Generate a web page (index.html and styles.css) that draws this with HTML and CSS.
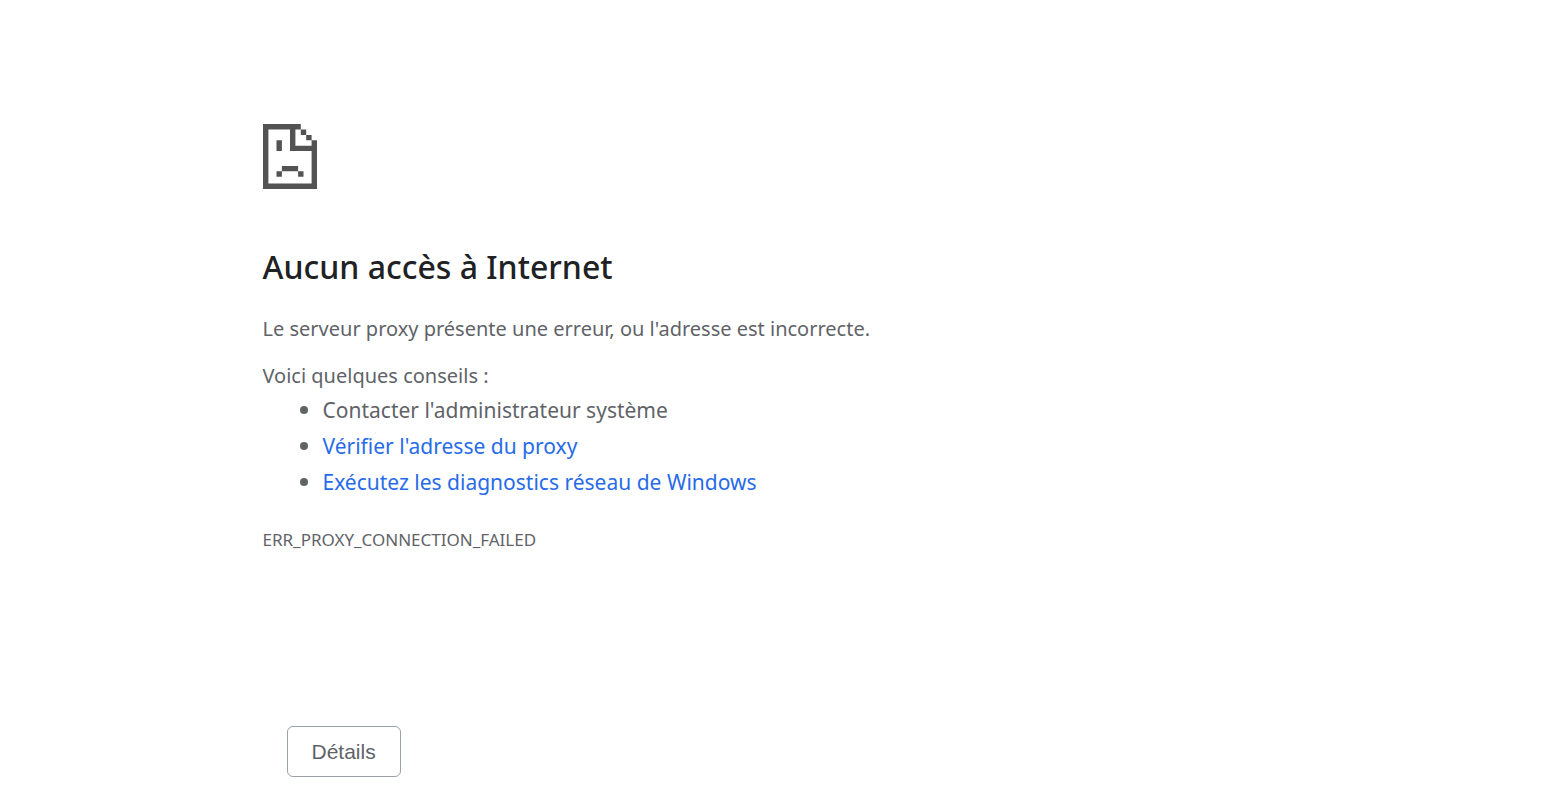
FILE: index.html
```
<!DOCTYPE html>
<html lang="fr">
<head>
<meta charset="utf-8">
<meta name="viewport" content="width=device-width, initial-scale=1">
<title>Aucun accès à Internet</title>
<link rel="stylesheet" href="styles.css">
</head>
<body>
<main class="error-page">
  <svg class="error-icon" viewBox="0 0 40 48" aria-hidden="true">
    <path d="M0 0H28V4H24V16H36V12H40V48H0ZM4 4V44H36V20H20V4ZM28 4H32V8H28ZM32 8H36V12H32ZM10 12H14V20H10ZM14 31H26V35H14ZM10 35H14V39H10ZM26 35H30V39H26Z" fill-rule="evenodd"/>
  </svg>
  <h1 class="title">Aucun accès à Internet</h1>
  <p class="summary">Le serveur proxy présente une erreur, ou l'adresse est incorrecte.</p>
  <p class="tips-label">Voici quelques conseils :</p>
  <ul class="tips">
    <li class="tip">Contacter l'administrateur système</li>
    <li class="tip"><a class="link" href="#proxy">Vérifier l'adresse du proxy</a></li>
    <li class="tip"><a class="link" href="#diagnostics">Exécutez les diagnostics réseau de Windows</a></li>
  </ul>
  <p class="error-code">ERR_PROXY_CONNECTION_FAILED</p>
  <div class="actions">
    <button class="details-button" type="button">Détails</button>
  </div>
</main>
</body>
</html>
```
FILE: styles.css
```
* {
  box-sizing: border-box;
}

body {
  margin: 0;
  background: #fff;
  color: #5f6368;
  font-family: "Segoe UI", "Noto Sans", sans-serif;
  font-size: 21px;
}

.error-page {
  max-width: 1080px;
  margin: 0 auto;
  padding: 124px 24px 24px;
}

.error-icon {
  display: block;
  width: 54px;
  height: 65px;
  fill: #535353;
}

.title {
  margin: 54px 0 24px;
  color: #202124;
  font-size: 32px;
  font-weight: 500;
  line-height: 48px;
}

.summary,
.tips-label {
  margin: 0;
  font-size: 20px;
  line-height: 28px;
}

.tips-label {
  margin-top: 19px;
}

.tips {
  margin: 2px 0 0;
  padding-left: 37px;
  line-height: 36px;
  list-style: none;
}

.tip {
  display: flex;
  align-items: center;
  gap: 15px;
}

.tip::before {
  content: "";
  flex: none;
  width: 8px;
  height: 8px;
  border-radius: 50%;
  background: currentColor;
}

.link {
  color: #276be9;
  text-decoration: none;
}

.error-code {
  margin: 28px 0 0;
  font-size: 17px;
  line-height: 24px;
}

.actions {
  margin-top: 174px;
  padding: 0 24px;
}

.details-button {
  padding: 12px 24px;
  border: 1px solid #9aa0a6;
  border-radius: 6px;
  background: #fff;
  color: #5f6368;
  font-family: "Liberation Sans", Arial, sans-serif;
  font-size: 21px;
  line-height: 25px;
  cursor: pointer;
}
```
